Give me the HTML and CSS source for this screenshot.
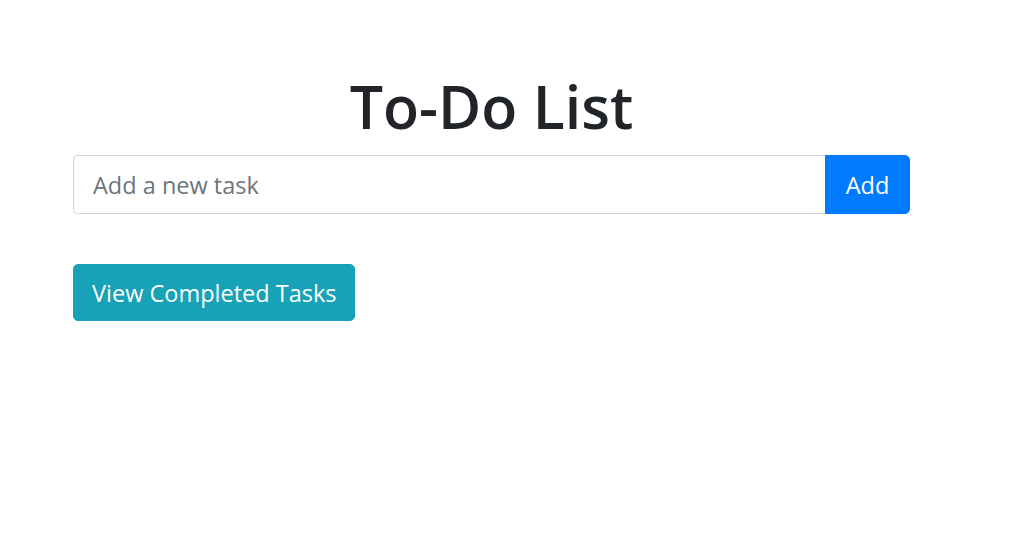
FILE: index.html
```html
<!DOCTYPE html>
<html lang="en">
<head>
<meta charset="utf-8">
<title>To-Do List</title>
<link rel="stylesheet" href="styles.css">
</head>
<body>
<main class="container">
  <h1 class="title">To-Do List</h1>
  <form class="input-group" onsubmit="return false">
    <input class="task-input" type="text" placeholder="Add a new task">
    <button class="btn btn-add" type="submit">Add</button>
  </form>
  <button class="btn btn-completed" type="button">View Completed Tasks</button>
</main>
</body>
</html>
```
FILE: styles.css
```css
* { box-sizing: border-box; }
html, body { margin: 0; padding: 0; background: #fff; }
body {
  font-family: "Open Sans", "Noto Sans", sans-serif;
  color: #212529;
}
.container {
  width: 837px;
  margin-left: 73px;
  padding-top: 68px;
}
.title {
  margin: 0 0 11px;
  text-align: center;
  font-size: 59px;
  font-weight: 600;
  line-height: 76px;
  color: #212529;
}
.input-group {
  display: flex;
  height: 59px;
  margin: 0 0 50px;
}
.task-input {
  flex: 1;
  min-width: 0;
  height: 59px;
  border: 1px solid #ced4da;
  border-right: none;
  border-radius: 5px 0 0 5px;
  padding: 1px 19px 0;
  font-family: inherit;
  font-size: 23.5px;
  color: #495057;
  outline: none;
}
.task-input::placeholder { color: #6c757d; opacity: 1; }
.btn {
  font-family: inherit;
  font-size: 23.5px;
  color: #fff;
  border: 1px solid transparent;
  cursor: pointer;
}
.btn-add {
  width: 85px;
  height: 59px;
  padding: 1px 0 0;
  background: #007bff;
  border-color: #007bff;
  border-radius: 0 5px 5px 0;
}
.btn-completed {
  display: block;
  height: 57px;
  padding: 1px 18px 0;
  background: #17a2b8;
  border-color: #17a2b8;
  border-radius: 5px;
}
```
